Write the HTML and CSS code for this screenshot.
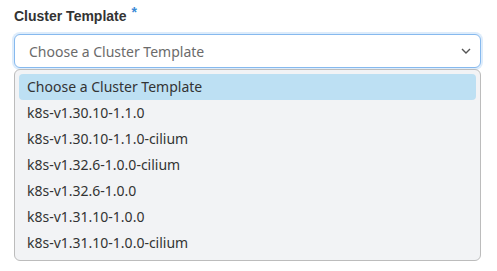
FILE: index.html
```html
<!DOCTYPE html>
<html lang="en">
<head>
    <meta charset="UTF-8">
    <meta name="viewport" content="width=device-width, initial-scale=1.0">
    <title>Cluster Template</title>
    <link rel="stylesheet" href="styles.css">
</head>
<body>
    <div class="field">
        <label class="field__label">Cluster Template <span class="field__req">*</span></label>
        <div class="select">
            <span class="select__value">Choose a Cluster Template</span>
            <svg class="select__arrow" width="10" height="6" viewBox="0 0 10 6">
                <path d="M1 1l4 4 4-4" fill="none" stroke="#555" stroke-width="1.4"/>
            </svg>
        </div>
        <ul class="options">
            <li class="option option--active">Choose a Cluster Template</li>
            <li class="option">k8s-v1.30.10-1.1.0</li>
            <li class="option">k8s-v1.30.10-1.1.0-cilium</li>
            <li class="option">k8s-v1.32.6-1.0.0-cilium</li>
            <li class="option">k8s-v1.32.6-1.0.0</li>
            <li class="option">k8s-v1.31.10-1.0.0</li>
            <li class="option">k8s-v1.31.10-1.0.0-cilium</li>
        </ul>
    </div>
</body>
</html>
```

FILE: styles.css
```css
body {
    margin: 0;
    background: #fff;
    font-family: 'Noto Sans', sans-serif;
    color: #333;
}

.field {
    width: 467px;
    padding: 6px 14px;
}

.field__label {
    display: block;
    font-family: 'Liberation Sans', Arial, sans-serif;
    font-weight: bold;
    font-size: 14px;
    line-height: 20px;
    color: #333;
    margin-bottom: 8px;
}

.field__req {
    color: #3a8bd6;
    font-size: 14px;
    line-height: 0;
    vertical-align: 4px;
    margin-left: 1px;
}

.select {
    display: flex;
    align-items: center;
    justify-content: space-between;
    height: 32px;
    padding: 0 8px 0 14px;
    border: 1px solid #86b9ee;
    border-radius: 6px;
    box-shadow: 0 0 0 2px rgba(120, 180, 240, 0.25);
    background: #fff;
}

.select__value {
    font-size: 14px;
    color: #6b6b6b;
}

.select__arrow {
    margin-right: 1px;
}

.options {
    list-style: none;
    margin: 1px 0 0;
    padding: 4px;
    background: #f2f3f5;
    border: 1px solid #bcbcbc;
    border-radius: 6px;
}

.option {
    height: 26px;
    line-height: 26px;
    padding-left: 8px;
    font-size: 14px;
    color: #333;
    border-radius: 4px;
}

.option--active {
    background: #bde0f3;
}
```
